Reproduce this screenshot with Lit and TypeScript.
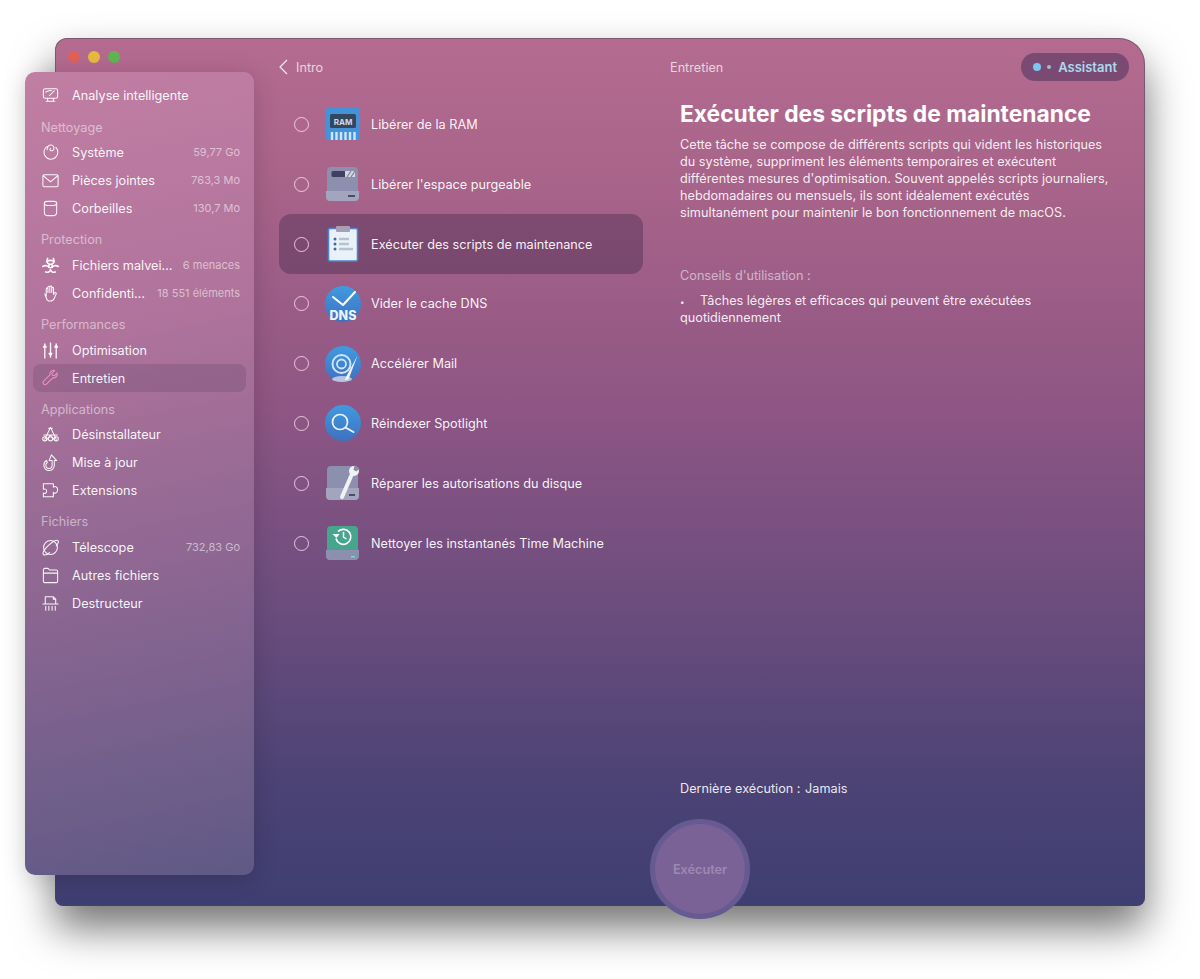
import { LitElement, html, css, svg } from 'lit';
import { customElement } from 'lit/decorators.js';

const sideIcons: Record<string, unknown> = {
  smart: svg`<rect x="2.5" y="3" width="15" height="10" rx="2"/><path d="M7 13v2.5M13 13v2.5M5.5 16h9M5 6.5c2-1.6 4-2 6-1.6M9 10l5-5"/>`,
  system: svg`<path d="M6.5 3.6A7.3 7.3 0 1 0 15.6 4.6"/><path d="M6.5 7.2C6 4.2 8.3 2 10.6 2.2c2.4.2 3.6 2.5 2.9 4.4-.6 1.6-2.3 2-3.4 1.3-.9-.6-.9-1.8-.1-2.3"/>`,
  mail: svg`<rect x="2" y="4" width="16" height="12.5" rx="1.6"/><path d="M2.4 5l7.6 6.4L17.6 5"/>`,
  bin: svg`<path d="M3.5 4.5c0-1.2 1.4-2 3-2h7c1.6 0 3 .8 3 2V14c0 2.2-1.6 3.5-3.5 3.5H7c-1.9 0-3.5-1.3-3.5-3.5z"/><path d="M3.5 5.5c1 1 2 1.3 3 1.3h7c1 0 2-.3 3-1.3"/>`,
  bio: svg`<g stroke-width="1.7"><circle cx="10" cy="10.5" r="1.8"/><path d="M7 2.5c-1.6 2.4-.6 5.4 2 6.3M13 2.5c1.6 2.4.6 5.4-2 6.3M1.8 11c2.6-1.5 5.6-.8 6.6 1M18.2 11c-2.6-1.5-5.6-.8-6.6 1M5 16.8c2.4 1 4.2-.2 5-2.4.8 2.2 2.6 3.4 5 2.4M6 6c2.4-1.6 5.6-1.6 8 0"/></g>`,
  hand: svg`<path d="M5.5 12.5V5.2c0-1.3 1.8-1.3 1.8 0V9m0-5.5c0-1.4 2-1.4 2 0V9m0-6c0-1.3 2-1.3 2 0v6m0-4.6c0-1.3 1.9-1.3 1.9 0V11l1-1.5c.8-1.2 2.4-.3 1.8.9l-2 4.6c-.8 1.9-2.2 3-4.2 3-2.7 0-3.8-1.6-4.3-3.5L4 10.5"/>`,
  sliders: svg`<g stroke-width="1.4"><path d="M4 3v15M10 2v15M16 3v15"/><path d="M2.5 6.5 4 4.5l1.5 2zM8.5 13l1.5 2 1.500-2zM14.5 6.5l1.5-2 1.5 2z" fill="currentColor"/></g>`,
  wrench: svg`<path d="M17 4.2 14 7.2l-2-.6-.6-2 3-3c-2.600-.8-5.500 1.300-5 4.500L3 12.600c-2.300 2.300.8 5.400 3 3.100l6.500-6.400c3 .5 5.300-2.400 4.500-5.100z"/>`,
  apps: svg`<path d="M10 2.5 4 15M10 2.5 16 15M3 10.5h14M8 3.5h4M6 15.5l4-5 4 5"/><circle cx="4" cy="14.5" r="2.2"/><circle cx="16" cy="14.5" r="2.2"/><circle cx="10" cy="14.5" r="2.2"/>`,
  update: svg`<path d="M11 2l5.5 6H14v5a5.5 5.5 0 0 1-11 0c0-2.5 1.3-4.3 3-5l.6 2c-1 .6-1.5 1.8-1.5 3a3.3 3.3 0 0 0 6.6 0V8H8.5z"/>`,
  puzzle: svg`<path d="M2.5 3h10.5v3.500c1-1.200 4.500-1.200 4.500 2.800s-3.500 4-4.500 2.700V16.500H2.500v-3.800c1.300.8 3.500.2 3.500-2s-2.200-2.800-3.500-2z"/>`,
  planet: svg`<circle cx="10" cy="10" r="7.3"/><path d="M2.6 17.4c-1.800-1.600 1.600-6.200 5.600-9.800S16.500 1.500 18 3c1.200 1.200-.6 3.500-2 5M2.600 17.400c1.500 1.200 4.400-.3 6.400-2"/>`,
  folder: svg`<path d="M2.5 5V4c0-.8.6-1.500 1.500-1.500h3.500L9 4.200h7c.9 0 1.500.6 1.500 1.500V16c0 .9-.6 1.500-1.500 1.500H4c-.9 0-1.500-.6-1.500-1.500z"/><path d="M2.500 7.500h15"/>`,
  shred: svg`<path d="M4.5 10V3h8.500l2.500 2.500V10M13 3v2.500h2.500M2 10.500h16M5 13v4M8.300 13v4M11.700 13v4M15 13v4"/>`,
};

const sections = [
  { rows: [{ i: 'smart', t: 'Analyse intelligente' }] },
  {
    label: 'Nettoyage',
    cls: 'low',
    rows: [
      { i: 'system', t: 'Système', v: '59,77 Go' },
      { i: 'mail', t: 'Pièces jointes', v: '763,3 Mo' },
      { i: 'bin', t: 'Corbeilles', v: '130,7 Mo' },
    ],
  },
  {
    label: 'Protection',
    rows: [
      { i: 'bio', t: 'Fichiers malvei…', v: '6 menaces' },
      { i: 'hand', t: 'Confidenti…', v: '18 551 éléments' },
    ],
  },
  {
    label: 'Performances',
    rows: [
      { i: 'sliders', t: 'Optimisation' },
      { i: 'wrench', t: 'Entretien', active: true },
    ],
  },
  {
    label: 'Applications',
    cls: 'tight',
    rows: [
      { i: 'apps', t: 'Désinstallateur' },
      { i: 'update', t: 'Mise à jour' },
      { i: 'puzzle', t: 'Extensions' },
    ],
  },
  {
    label: 'Fichiers',
    rows: [
      { i: 'planet', t: 'Télescope', v: '732,83 Go' },
      { i: 'folder', t: 'Autres fichiers' },
      { i: 'shred', t: 'Destructeur' },
    ],
  },
];

const taskIcons: Record<string, unknown> = {
  ram: svg`
    <rect x="2" y="2" width="34" height="32" rx="2" fill="#4493d8"/>
    <rect x="6" y="8" width="26" height="14" rx="1.5" fill="#35465f"/>
    <text x="19" y="18.5" text-anchor="middle" font-size="8" font-weight="700" fill="#d0dae4" font-family="Inter, sans-serif">RAM</text>
    <path d="M8 26v8M12.5 26v8M17 26v8M21.5 26v8M26 26v8M30.5 26v8" stroke="#cfe4f6" stroke-width="2.4"/>`,
  purge: svg`
    <g transform="translate(0 1)">
      <rect x="3" y="0" width="31" height="34" rx="4" fill="#8d8fae"/>
      <rect x="7.5" y="4" width="23.5" height="6" rx="1.5" fill="#3e4260"/>
      <rect x="21" y="4" width="10" height="6" fill="#d5d6e2"/>
      <path d="M23 10l4-6M27 10l4-6" stroke="#7f8199" stroke-width="1.2"/>
      <path d="M2 24h33v6c0 2.5-1.5 4-4 4H6c-2.5 0-4-1.5-4-4z" fill="#a3a5bf"/>
      <rect x="24" y="28" width="7" height="2" fill="#4a4d68"/>
    </g>`,
  scripts: svg`
    <rect x="4.5" y="2.5" width="29" height="32.5" rx="1.5" fill="#eaf1f8" stroke="#4f86cf" stroke-width="1.6"/>
    <rect x="12" y="0" width="14" height="6" rx="1" fill="#a79fb4"/>
    <g fill="#3f6d9e"><circle cx="11" cy="13" r="1.5"/><circle cx="11" cy="18" r="1.5"/><circle cx="11" cy="23" r="1.5"/></g>
    <path d="M15 13h10M15 18h10M15 23h14" stroke="#b6c2cf" stroke-width="2.6"/>`,
  dns: svg`
    <defs><linearGradient id="blue" x1="0" y1="0" x2="0" y2="1"><stop offset="0" stop-color="#3f9be0"/><stop offset="1" stop-color="#3f70c0"/></linearGradient></defs>
    <circle cx="19" cy="18" r="18" fill="url(#blue)"/>
    <path d="M9 11l10 8L31 6" fill="none" stroke="#fff" stroke-width="2" stroke-linecap="round" stroke-linejoin="round"/>
    <text x="19" y="34" text-anchor="middle" font-size="12.5" font-weight="800" fill="#eaf4fd" font-family="Inter, sans-serif">DNS</text>`,
  mail: svg`
    <circle cx="19" cy="18" r="18" fill="url(#blue)"/>
    <ellipse cx="18" cy="33" rx="10" ry="3" fill="#b8c4e2"/>
    <circle cx="17.5" cy="18" r="9" fill="none" stroke="#cfe5f8" stroke-width="2"/>
    <circle cx="17.5" cy="18" r="4.5" fill="none" stroke="#cfe5f8" stroke-width="1.8"/>
    <path d="M33.5 9.5 24.5 33.5l-3.5.5 1-3z" fill="#edf4fb"/>`,
  spot: svg`
    <circle cx="19" cy="18" r="18" fill="url(#blue)"/>
    <circle cx="16" cy="17" r="7.5" fill="none" stroke="#eaf4fd" stroke-width="1.7"/>
    <path d="M21.5 22.5l8 4.500" stroke="#eaf4fd" stroke-width="2" stroke-linecap="round"/>`,
  repair: svg`
    <g transform="translate(0 1)">
      <rect x="3" y="0" width="31" height="34" rx="4" fill="#8d8fae"/>
      <path d="M2 22h33v8c0 2.5-1.5 4-4 4H6c-2.5 0-4-1.5-4-4z" fill="#a3a5bf"/>
      <rect x="25" y="28" width="6" height="2" fill="#4a4d68"/>
      <path d="M18 31 28 8" stroke="#f1f2f6" stroke-width="4" stroke-linecap="round"/>
      <circle cx="30" cy="5" r="5" fill="#f1f2f6"/>
      <path d="M30.5 -1l-1 5 3 1.5 3-3z" fill="#8f8aa4"/>
    </g>`,
  tm: svg`
    <g transform="translate(0 1)">
      <rect x="3" y="0" width="31" height="34" rx="4" fill="#46a58c"/>
      <path d="M2 24h33v6c0 2.5-1.5 4-4 4H6c-2.5 0-4-1.5-4-4z" fill="#8d8fae"/>
      <rect x="27" y="30" width="4" height="1.5" fill="#78d9d0"/>
      <path d="M14 5.5a7.5 7.5 0 1 1-2 7" fill="none" stroke="#fff" stroke-width="1.7"/>
      <path d="M8.5 8h7l-3 4z" fill="#fff"/>
      <path d="M19.5 6v5l3 2" fill="none" stroke="#fff" stroke-width="1.5"/>
    </g>`,
};

const tasks = [
  { i: 'ram', t: 'Libérer de la RAM' },
  { i: 'purge', t: "Libérer l'espace purgeable" },
  { i: 'scripts', t: 'Exécuter des scripts de maintenance', active: true },
  { i: 'dns', t: 'Vider le cache DNS' },
  { i: 'mail', t: 'Accélérer Mail' },
  { i: 'spot', t: 'Réindexer Spotlight' },
  { i: 'repair', t: 'Réparer les autorisations du disque' },
  { i: 'tm', t: 'Nettoyer les instantanés Time Machine' },
];

@customElement('app-root')
export class AppRoot extends LitElement {
  static styles = css`
    :host {
      display: block;
      width: 1200px;
      height: 979px;
      box-sizing: border-box;
      padding: 38px 55px 73px;
      background: #fff;
      overflow: hidden;
      font-family: Inter, 'Liberation Sans', sans-serif;
      font-size: 12.7px;
      color: #fff;
    }

    .window {
      position: relative;
      display: flex;
      height: 868px;
      border-radius: 12px 26px 8px 8px;
      background: linear-gradient(180deg, #b56b90 0%, #a76389 18%, #8f5684 42%, #6c4d7e 65%, #4d4375 85%, #3f3e71 100%);
      box-shadow: inset 0 0 0 1px rgba(70, 70, 85, 0.5), 0 22px 42px rgba(0, 0, 0, 0.55);
    }

    .lights {
      position: absolute;
      top: 13px;
      left: 13px;
      display: flex;
      gap: 8px;
    }
    .lights i {
      width: 12px;
      height: 12px;
      border-radius: 50%;
    }

    .sidebar {
      flex: none;
      width: 229px;
      height: 803px;
      box-sizing: border-box;
      margin: 34px 0 0 -30px;
      padding: 9px 8px 0;
      border-radius: 10px;
      background: linear-gradient(168deg, #c17ea3 0%, #b0739c 32%, #8d6792 62%, #5f5986 100%);
      box-shadow: 0 4px 24px rgba(0, 0, 0, 0.16);
      position: relative;
    }
    .side-label {
      height: 29px;
      box-sizing: border-box;
      padding: 10px 0 0 8px;
      line-height: 16px;
      color: rgba(255, 255, 255, 0.5);
    }
    .side-label.low {
      padding-top: 11px;
    }
    .side-label.tight {
      height: 28px;
    }
    .side-row {
      display: flex;
      align-items: center;
      height: 28px;
      padding: 0 6px 0 8px;
      border-radius: 8px;
      color: rgba(255, 255, 255, 0.94);
    }
    .side-row.active {
      background: rgba(60, 40, 80, 0.17);
    }
    .side-row.active svg {
      color: #f08fc4;
    }
    .side-row svg {
      flex: none;
      width: 19px;
      height: 19px;
      margin-right: 12px;
      fill: none;
      stroke: currentColor;
      stroke-width: 1.1;
      stroke-linecap: round;
      stroke-linejoin: round;
    }
    .side-row .val {
      margin-left: auto;
      font-size: 11px;
      color: rgba(255, 255, 255, 0.55);
      white-space: nowrap;
    }

    .content {
      flex: 1;
      min-width: 0;
      display: flex;
      flex-direction: column;
    }
    .topbar {
      flex: none;
      display: grid;
      grid-template-columns: 391px 1fr auto;
      align-items: center;
      height: 56px;
      padding: 2px 16px 0 25px;
      box-sizing: border-box;
      color: rgba(255, 255, 255, 0.72);
    }
    .back {
      display: flex;
      align-items: center;
      gap: 8px;
    }
    .back svg {
      width: 9px;
      height: 16px;
      fill: none;
      stroke: rgba(255, 255, 255, 0.85);
      stroke-width: 1.2;
    }
    .pill {
      display: flex;
      align-items: center;
      height: 28px;
      padding: 0 12px;
      border-radius: 14px;
      background: #7a4a72;
      color: #a9daf2;
      font-size: 13px;
      font-weight: 600;
    }
    .pill i {
      width: 8px;
      height: 8px;
      border-radius: 50%;
      background: #7cc6f2;
    }
    .pill i + i {
      width: 4px;
      height: 4px;
      margin: 0 7px 0 6px;
      background: #a9b9cc;
    }

    .body {
      flex: 1;
      min-height: 0;
      display: flex;
    }
    .list {
      flex: none;
      width: 364px;
      margin-left: 25px;
      padding-top: 0.6px;
    }
    .task {
      display: flex;
      align-items: center;
      height: 59.8px;
      padding-left: 15px;
      border-radius: 12px;
      color: rgba(255, 255, 255, 0.94);
    }
    .task.active {
      background: rgba(60, 35, 70, 0.37);
    }
    .radio {
      flex: none;
      width: 15px;
      height: 15px;
      box-sizing: border-box;
      border: 1px solid rgba(255, 225, 245, 0.8);
      border-radius: 50%;
    }
    .task svg {
      flex: none;
      width: 38px;
      height: 38px;
      margin: 0 9px 0 15px;
      overflow: visible;
    }

    .detail {
      flex: 1;
      min-width: 0;
      display: flex;
      flex-direction: column;
      padding: 3px 0 109px 37px;
    }
    h1 {
      margin: 0 0 5px;
      font-size: 22.8px;
      line-height: 34px;
      font-weight: 700;
    }
    .detail p {
      width: 432px;
      margin: 0;
      line-height: 17px;
      color: rgba(255, 255, 255, 0.9);
    }
    .detail .tips {
      margin-top: 46px;
      color: rgba(255, 255, 255, 0.55);
    }
    .detail .tip {
      margin-top: 8px;
    }
    .tip::before {
      content: '•';
      display: inline-block;
      width: 20px;
      font-size: 8px;
      line-height: 8px;
    }
    .detail .last {
      margin-top: auto;
    }
    .last span {
      margin-left: 1px;
    }

    .run {
      position: absolute;
      left: 595px;
      bottom: -13px;
      width: 100px;
      height: 100px;
      box-sizing: border-box;
      border: 4px solid #655b92;
      border-radius: 50%;
      background: #7a6296;
      box-shadow: inset 0 0 0 1px rgba(90, 80, 140, 0.6);
      display: flex;
      align-items: center;
      justify-content: center;
      color: #9c8ab4;
      font-weight: 600;
    }
  `;

  render() {
    return html`
      <div class="window">
        <div class="lights">
          <i style="background:#e0605a"></i>
          <i style="background:#e8b93e"></i>
          <i style="background:#5fb552"></i>
        </div>
        <nav class="sidebar">
          ${sections.map(
            (s) => html`
              ${s.label ? html`<div class="side-label ${s.cls ?? ''}">${s.label}</div>` : ''}
              ${s.rows.map(
                (r: any) => html`
                  <div class="side-row ${r.active ? 'active' : ''}">
                    <svg viewBox="0 0 20 20">${sideIcons[r.i]}</svg>
                    <span>${r.t}</span>
                    ${r.v ? html`<span class="val">${r.v}</span>` : ''}
                  </div>
                `
              )}
            `
          )}
        </nav>
        <div class="content">
          <header class="topbar">
            <div class="back">
              <svg viewBox="0 0 9 16"><path d="M8 1 1 8l7 7" /></svg>
              <span>Intro</span>
            </div>
            <div>Entretien</div>
            <div class="pill"><i></i><i></i>Assistant</div>
          </header>
          <div class="body">
            <div class="list">
              ${tasks.map(
                (t) => html`
                  <div class="task ${t.active ? 'active' : ''}">
                    <span class="radio"></span>
                    <svg viewBox="0 0 38 36">${taskIcons[t.i]}</svg>
                    <span>${t.t}</span>
                  </div>
                `
              )}
            </div>
            <section class="detail">
              <h1>Exécuter des scripts de maintenance</h1>
              <p>
                Cette tâche se compose de différents scripts qui vident les historiques du système, suppriment les
                éléments temporaires et exécutent différentes mesures d'optimisation. Souvent appelés scripts
                journaliers, hebdomadaires ou mensuels, ils sont idéalement exécutés simultanément pour maintenir le bon
                fonctionnement de macOS.
              </p>
              <p class="tips">Conseils d'utilisation :</p>
              <p class="tip">Tâches légères et efficaces qui peuvent être exécutées quotidiennement</p>
              <p class="last">Dernière exécution : <span>Jamais</span></p>
            </section>
          </div>
        </div>
        <div class="run">Exécuter</div>
      </div>
    `;
  }
}
